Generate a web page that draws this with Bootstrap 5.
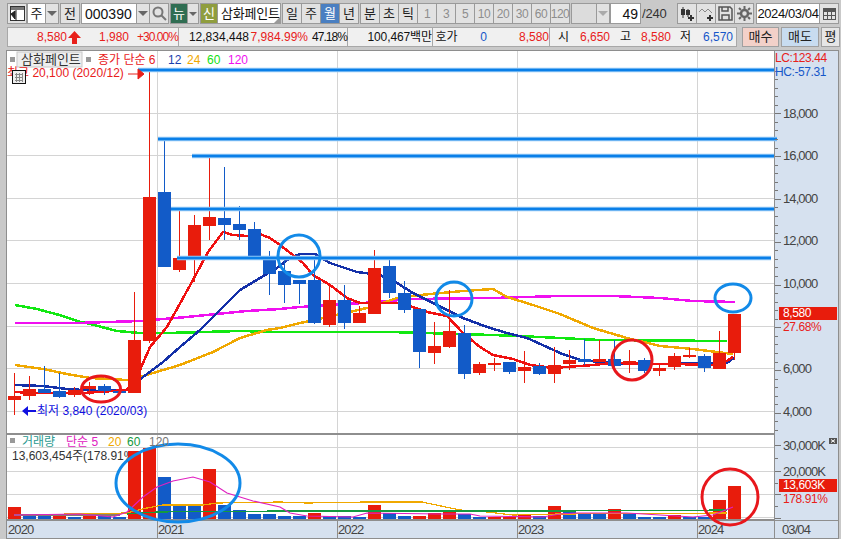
<!DOCTYPE html>
<html lang="ko">
<head>
<meta charset="utf-8">
<title>삼화페인트 차트</title>
<link href="https://cdn.jsdelivr.net/npm/bootstrap@5.3.0/dist/css/bootstrap.min.css" rel="stylesheet">
<style>
html,body{margin:0;height:539px;overflow:hidden;background:#c9c9c9}
body{font-family:"Liberation Sans","Noto Sans CJK KR",sans-serif;font-size:12px;color:#222;line-height:1}
.tool-a{height:21px;margin:3px 0 0 7px}
.tool-b{height:20px;margin:3px 2px 0 7px}
.key{--bs-btn-padding-x:0;--bs-btn-padding-y:0;--bs-btn-font-size:13px;--bs-btn-border-radius:0;--bs-btn-color:#222;--bs-btn-bg:#e2e2e2;--bs-btn-border-color:#9a9a9a;--bs-btn-border-width:1px;--bs-btn-line-height:1;display:flex;align-items:center;justify-content:center;height:21px;width:20px;flex:none;margin-right:-1px;white-space:nowrap}
.key-on{--bs-btn-bg:#4a7fc1;--bs-btn-color:#fff}
.key-off{color:#8d8d8d;font-size:12px;letter-spacing:-.5px}
.key-arrow{width:14px}
.key-mini{width:12px}
.tri{width:0;height:0;border-left:5px solid transparent;border-right:5px solid transparent;border-top:5px solid #666}
.key-mini .tri{border-left-width:4px;border-right-width:4px;border-top-width:4px}
.tri-pale{border-top-color:#aaa}
.field{background:#fff;border:1px solid #9a9a9a;height:21px;display:flex;align-items:center;flex:none;margin-right:-1px;font-size:14px;color:#111}
.w-sel{width:19px;justify-content:center;font-size:13px}
.w-code{width:56px;padding-left:3px}.w-name{width:64px;padding-left:3px;font-size:13px;letter-spacing:-.2px;position:relative}
.w-count{width:31px;justify-content:flex-end;padding-right:2px}.w-date{width:64px;justify-content:center;letter-spacing:-.4px;font-size:13px}
.w-combo{width:26px;background:#dcdcdc}
.corner{position:absolute;right:0;bottom:0;width:0;height:0;border-left:6px solid transparent;border-bottom:6px solid #999}
.badge-new{background:#2f6d52;color:#fff;width:18px;font-size:13px}
.badge-sin{background:#8f9d3e;color:#fff;width:18px;font-size:13px}
.gap3{margin-left:3px}.gap2{margin-left:2px}.gap1{margin-left:1px}
.gap8{margin-left:8px}
.total{width:29px;font-size:13px;color:#333;letter-spacing:-.2px;padding-left:2px;flex:none}
.quote{width:730px;height:20px;background:#f0f0f0;border:1px solid #a8a8a8;flex:none;font-size:12px;color:#111}
.cell{display:flex;align-items:center;justify-content:flex-end;height:100%;flex:none;white-space:nowrap}
.up{color:#e8201a}.dn{color:#1557c9}
.line-r{border-right:1px solid #a8a8a8}
.pct{letter-spacing:-.95px}
.c1{width:59px}.c2{width:15px;justify-content:center}.c3{width:47px}.c4{width:50px}
.c5{width:70px}.c6{width:59px}.c7{width:40px}
.c8{width:84px;letter-spacing:-.1px}.c9{width:28px;justify-content:center;border-left:1px solid #a8a8a8}.c10{width:27px}.c11{width:62px}
.c12{width:20px;justify-content:flex-end;border-left:1px solid #a8a8a8}.c13{width:41px}.c14{width:21px}.c15{width:40px}.c16{width:20px}.c17{width:42px}
.trade{--bs-btn-padding-x:0;--bs-btn-padding-y:0;--bs-btn-font-size:13px;--bs-btn-border-radius:0;--bs-btn-border-color:#a0a0a0;--bs-btn-color:#222;height:20px;flex:none;display:flex;align-items:center;justify-content:center;margin-left:2px}
.buy{width:37px;--bs-btn-bg:#f3d1c9;margin-left:5px}.sell{width:38px;--bs-btn-bg:#c8dcf0}.even{width:19px;--bs-btn-bg:#e6e6e6}
.chart-box{display:block;margin-top:3px}
svg text{font-family:"Liberation Sans","Noto Sans CJK KR",sans-serif;font-size:12px}
.ax{font-size:13px;letter-spacing:-.9px;fill:#444}
.tag{font-size:12px;letter-spacing:-.4px;fill:#fff}
.ax-r{font-size:12px;letter-spacing:-.4px;fill:#e8201a}
.ax-b{font-size:12px;letter-spacing:-.4px;fill:#1557c9}
.lab{font-size:12px}
.chip{font-size:13px}
</style>
</head>
<body>
<div class="d-flex tool-a">
  <div class="btn key"><svg width="15" height="15" viewBox="0 0 15 15"><rect x=".5" y=".5" width="14" height="14" fill="#fff" stroke="#333"/><rect x="1" y="1" width="13" height="3" fill="#777"/><path d="M6 4v11M1 8l4-3v8z" fill="#222" stroke="#222"/></svg></div>
  <div class="gap1 d-flex"><div class="field w-sel">주</div><div class="btn key key-arrow"><span class="tri"></span></div></div>
  <div class="btn key gap2">전</div>
  <div class="gap2 d-flex"><div class="field w-code">000390</div><div class="btn key key-arrow"><span class="tri"></span></div>
  <div class="btn key"><svg width="15" height="15" viewBox="0 0 15 15" fill="none" stroke="#777" stroke-width="2"><circle cx="6" cy="6" r="4.5"/><path d="M9.500 9.500l4.500 4.500"/></svg></div></div>
  <div class="gap2 d-flex"><div class="btn key badge-new">뉴</div><div class="btn key key-mini"><span class="tri"></span></div></div>
  <div class="gap2 d-flex"><div class="btn key badge-sin">신</div><div class="field w-name">삼화페인트<span class="corner"></span></div></div>
  <div class="gap2 d-flex"><div class="btn key">일</div><div class="btn key">주</div><div class="btn key key-on">월</div><div class="btn key">년</div></div>
  <div class="gap2 d-flex"><div class="btn key">분</div><div class="btn key">초</div><div class="btn key">틱</div>
  <div class="btn key key-off">1</div><div class="btn key key-off">3</div><div class="btn key key-off">5</div><div class="btn key key-off">10</div><div class="btn key key-off">20</div><div class="btn key key-off">30</div><div class="btn key key-off">60</div><div class="btn key key-off">120</div></div>
  <div class="gap2 d-flex"><div class="field w-combo"></div><div class="btn key key-arrow"><span class="tri tri-pale"></span></div></div>
  <div class="d-flex gap1"><div class="field w-count">49</div></div><div class="total d-flex align-items-center">/240</div>
  <div class="gap8 d-flex">
    <div class="btn key"><svg width="15" height="15" viewBox="0 0 15 15"><path d="M3 1v11M8 3v8" stroke="#333"/><rect x="1" y="3" width="4" height="6" fill="#333"/><rect x="6" y="4" width="4" height="5" fill="#333"/><path d="M11 9v6M8 12h6" stroke="#333" stroke-width="2"/></svg></div>
    <div class="btn key"><svg width="15" height="15" viewBox="0 0 15 15" fill="none"><path d="M0 6l3-3 3 3 3-3 4 4" stroke="#888"/><path d="M11 9v6M8 12h6" stroke="#333" stroke-width="2"/></svg></div>
    <div class="btn key"><svg width="15" height="15" viewBox="0 0 15 15" fill="none" stroke="#555" stroke-width="1.500"><path d="M1 1h11l2 2v11H1z"/><path d="M4 1v4h6V1M4 14V9h7v5"/></svg></div>
    <div class="btn key"><svg width="15" height="15" viewBox="0 0 15 15" fill="none" stroke="#666"><circle cx="7.500" cy="7.500" r="3.500" stroke-width="2.500"/><path d="M7.500 0v3M7.500 12v3M0 7.500h3M12 7.500h3M2 2l2 2M11 11l2 2M13 2l-2 2M4 11l-2 2" stroke-width="2"/></svg></div>
  </div>
  <div class="gap3 d-flex"><div class="field w-date">2024/03/04</div><div class="btn key"><svg width="15" height="14" viewBox="0 0 15 14" fill="none" stroke="#555"><rect x="1.500" y="1.500" width="12" height="11"/><rect x="1.500" y="1.500" width="12" height="3" fill="#555"/><path d="M5.500 5v7M9.500 5v7M2 8.500h11"/></svg></div></div>
</div>
<div class="d-flex tool-b">
  <div class="quote d-flex">
    <div class="cell c1 up">8,580</div>
    <div class="cell c2"><svg width="13" height="13" viewBox="0 0 13 13"><path d="M6.500 0L13 7H9v6H4V7H0z" fill="#e8201a"/></svg></div>
    <div class="cell c3 up">1,980</div>
    <div class="cell c4 up line-r pct">+30.00%</div>
    <div class="cell c5">12,834,448</div>
    <div class="cell c6 up">7,984.99%</div>
    <div class="cell c7 line-r pct">47.18%</div>
    <div class="cell c8">100,467백만</div>
    <div class="cell c9">호가</div>
    <div class="cell c10 dn">0</div>
    <div class="cell c11 up">8,580</div>
    <div class="cell c12">시</div>
    <div class="cell c13 up">6,650</div>
    <div class="cell c14">고</div>
    <div class="cell c15 up">8,580</div>
    <div class="cell c16">저</div>
    <div class="cell c17 dn">6,570</div>
  </div>
  <div class="btn trade buy">매수</div>
  <div class="btn trade sell">매도</div>
  <div class="btn trade even">평</div>
</div>
<svg class="chart-box" id="chart" width="841" height="489" viewBox="0 50 841 489">
  <rect x="6" y="50" width="833" height="489" fill="#8e8e8e"/>
  <rect x="7" y="51" width="767" height="382" fill="#fff"/>
  <rect x="7" y="435" width="767" height="84" fill="#fff"/>
  <rect x="775" y="51" width="63" height="469" fill="#d6e1ef"/>
  <rect x="7" y="521" width="831" height="17" fill="#d6e1ef"/>
  <g id="grid" stroke="#d4d4d4" shape-rendering="crispEdges"></g>
  <text class="lab" x="12" y="460" fill="#333">13,603,454주(178.91%)</text>
  <g id="vol" shape-rendering="crispEdges"></g>
  <g id="volma" fill="none" stroke-width="1.200"></g>
  <g id="ma" fill="none" stroke-width="2.500"></g>
  <g id="candles" shape-rendering="crispEdges"></g>
  <g id="levels" fill="none"></g>
  <g fill="none" stroke-width="3">
    <ellipse cx="101" cy="389" rx="19.500" ry="13" stroke="#e8171c"/>
    <ellipse cx="632" cy="360" rx="20" ry="20" stroke="#e8171c"/>
    <ellipse cx="730" cy="497" rx="28" ry="28" stroke="#e8171c"/>
    <ellipse cx="299" cy="256" rx="21" ry="21" stroke="#128ae8"/>
    <ellipse cx="454" cy="299" rx="18" ry="17" stroke="#128ae8"/>
    <ellipse cx="733" cy="298" rx="18" ry="14" stroke="#128ae8"/>
    <ellipse cx="178" cy="483" rx="62" ry="39" stroke="#128ae8"/>
  </g>
  <g id="ticks" stroke="#777" shape-rendering="crispEdges"></g>

  <rect x="10" y="57" width="5" height="5" fill="#999"/>
  <rect x="17" y="52" width="65" height="15" fill="#eee" stroke="#c8c8c8"/>
  <text class="chip" x="21" y="64" fill="#333">삼화페인트</text>
  <rect x="86" y="57" width="5" height="5" fill="#999"/>
  <text class="lab" x="98" y="64" fill="#e8201a">종가 단순 6</text>
  <text class="lab" x="168" y="64" fill="#1a3fae">12</text>
  <text class="lab" x="187" y="64" fill="#f0a800">24</text>
  <text class="lab" x="207" y="64" fill="#12e012">60</text>
  <text class="lab" x="228" y="64" fill="#f010f0">120</text>
  <text class="lab" x="7" y="77" fill="#e8201a">최고 20,100 (2020/12)</text>
  <path d="M128 74h10M138 69l6 5-6 5z" stroke="#e8201a" fill="#e8201a"/>
  <rect x="12.500" y="70.500" width="13" height="13" fill="#eee" stroke="#111"/>
  <path d="M15 74.500h8M15 77.500h8M15 80.500h8M16.500 73v9M19.500 73v9M22.500 73v9" stroke="#888" fill="none"/>
  <path d="M22 411l6-5v4h8v2h-8v4z" fill="#1010e0"/>
  <text class="lab" x="37" y="415" fill="#1010e0">최저 3,840 (2020/03)</text>

  <rect x="10" y="438" width="5" height="5" fill="#999"/>
  <text class="lab" x="22" y="446" fill="#2a9a90">거래량</text>
  <text class="lab" x="66" y="446" fill="#e020c0">단순 5</text>
  <text class="lab" x="108" y="446" fill="#f0a800">20</text>
  <text class="lab" x="127" y="446" fill="#149a40">60</text>
  <text class="lab" x="149" y="446" fill="#777">120</text>

  <text x="775" y="62" class="ax-r">LC:123.44</text>
  <text x="775" y="76" class="ax-b">HC:-57.31</text>
  <text x="783" y="118" class="ax">18,000</text>
  <text x="783" y="160" class="ax">16,000</text>
  <text x="783" y="203" class="ax">14,000</text>
  <text x="783" y="245" class="ax">12,000</text>
  <text x="783" y="288" class="ax">10,000</text>
  <text x="783" y="373" class="ax">6,000</text>
  <text x="783" y="416" class="ax">4,000</text>
  <rect x="779" y="307" width="58" height="13" fill="#e81c0c"/>
  <text x="783" y="317" class="tag">8,580</text>
  <text x="783" y="331" class="ax-r">27.68%</text>
  <text x="783" y="450" class="ax">30,000K</text>
  <text x="783" y="476" class="ax">20,000K</text>
  <rect x="779" y="479" width="58" height="13" fill="#e81c0c"/>
  <text x="783" y="489" class="tag">13,603K</text>
  <text x="783" y="503" class="ax-r">178.91%</text>
  <rect x="829" y="438" width="8" height="6" fill="#555"/>
  <path d="M831 439.500l4 3M835 439.500l-4 3" stroke="#fff"/>
  <text x="8" y="534" class="ax">2020</text>
  <text x="158" y="534" class="ax">2021</text>
  <text x="338" y="534" class="ax">2022</text>
  <text x="518" y="534" class="ax">2023</text>
  <text x="698" y="534" class="ax">2024</text>
  <text x="782" y="534" class="ax">03/04</text>
</svg>
<script>
const NS='http://www.w3.org/2000/svg';
function el(p,n,a){const e=document.createElementNS(NS,n);for(const k in a)e.setAttribute(k,a[k]);document.getElementById(p).appendChild(e);return e}
const RED='#e81c0c',BLUE='#125bc8';
[113.5,155.5,198.5,240.5,283.5,326.5,368.5,411.5,447.5,471.5,494.5,517.5].forEach(y=>el('grid','line',{x1:7,x2:774,y1:y,y2:y}));
[157.5,337.5,517.5,697.5].forEach(x=>{el('grid','line',{x1:x,x2:x,y1:51,y2:433});el('grid','line',{x1:x,x2:x,y1:435,y2:519});el('grid','line',{x1:x,x2:x,y1:520,y2:538,stroke:'#8e8e8e'})});
el('grid','line',{x1:7,x2:774,y1:433.5,y2:433.5,stroke:'#8e8e8e'});
el('grid','line',{x1:7,x2:838,y1:520.5,y2:520.5,stroke:'#8e8e8e'});
el('grid','line',{x1:774.5,x2:774.5,y1:51,y2:538,stroke:'#8e8e8e'});
// [colour, body top, body bottom, wick top, wick bottom]
const C=[['r',396,400,373,415],['r',389,396,376,400],['b',389,393,366,393],['b',391,397,373,398],['r',390,395,387,397],['r',386,389,382,395],['b',386,391,384,395],['b',391,393,389,393],['r',340,393,292,393],['r',197,341,70,343],['b',192,267,140,267],['r',258,270,210,272],['r',225,256,215,282],['r',217,226,157,240],['b',218,225,167,240],['b',224,230,206,240],['b',229,257,222,258],['b',257,274,251,295],['b',271,285,257,303],['b',280,284,280,304],['b',280,323,260,324],['r',300,325,285,327],['b',300,323,285,329],['r',313,323,306,323],['r',268,314,250,314],['b',266,293,258,298],['b',293,310,281,313],['b',309,352,309,368],['r',346,353,322,364],['r',331,347,290,348],['b',333,374,325,379],['r',364,373,362,375],['r',363,365,358,371],['b',362,372,362,374],['r',367,371,351,383],['b',366,374,363,375],['r',365,374,347,383],['r',360,364,350,370],['b',359,362,339,365],['r',359,362,340,362],['b',359,366,340,367],['r',361,363,350,373],['b',360,371,358,373],['r',368,371,365,376],['r',356,367,353,370],['r',355,356,348,358],['b',356,368,354,372],['r',353,369,331,369],['r',314,353,314,360]];
const V=[['r',507],['b',515],['b',515],['r',514],['b',517],['r',516],['b',516],['b',517],['r',451],['r',448],['b',477],['b',504],['b',505],['r',469],['b',505],['b',510],['b',514],['b',514],['b',516],['b',516],['r',513],['b',516],['b',516],['b',517],['r',505],['b',513],['b',516],['r',516],['r',513],['r',512],['b',514],['b',517],['r',517],['r',517],['r',515],['b',516],['r',506],['b',512],['b',513],['b',513],['r',509],['b',514],['b',517],['b',517],['r',515],['b',517],['b',517],['r',500],['r',486]];
C.forEach((c,i)=>{const x=8+15*i,f=c[0]=='r'?RED:BLUE;
  el('candles','rect',{x:x+6,y:c[3],width:1,height:c[4]-c[3],fill:f});
  el('candles','rect',{x:x,y:c[1],width:13,height:Math.max(2,c[2]-c[1]),fill:f});
  const t=V[i];el('vol','rect',{x:x,y:t[1],width:13,height:519-t[1],fill:t[0]=='r'?RED:BLUE});});
function poly(g,col,pts){el(g,'polyline',{points:pts,stroke:col,'shape-rendering':'crispEdges'})}
poly('ma','#12e812','15,305 37,309 63,316 77,321 90,324 117,331 140,333 167,333 240,331 280,332 390,332 493,335 540,337 600,340 727,341');
poly('ma','#f010f0','15,323 77,323 140,321 187,317 247,311 280,309 300,307 363,303 413,299 493,298 560,296 613,296 660,298 693,301 735,302');
poly('ma','#f0a800','15,365 43,369 67,374 90,378 127,380 143,376 180,365 213,352 240,338 267,330 280,328 300,323 323,318 367,308 397,298 420,295 463,291 493,289 507,297 533,305 560,314 593,328 627,338 660,346 693,349 733,354');
poly('ma','#1430a8','15,385 43,386 67,389 100,391 127,390 143,377 163,362 180,347 200,330 217,313 240,290 260,278 277,268 290,258 300,254 315,254 330,263 357,272 380,275 397,283 413,293 437,305 463,318 487,327 507,333 527,338 547,347 560,353 580,360 610,363 653,364 727,363 735,357');
poly('ma','#f01010','15,392 33,393 50,393 83,393 127,390 140,370 150,347 167,327 193,280 208,252 223,232 233,235 247,236 257,233 270,238 280,245 293,255 303,263 313,275 330,285 347,298 360,303 397,303 413,307 427,312 447,316 463,333 480,347 493,355 513,359 530,365 553,368 593,365 613,363 653,364 673,364 720,365 733,357');
poly('volma','#f0a800','14,515 127,513 147,508 163,505 203,505 217,503 280,502 307,503 367,502 422,502 460,510 487,512 513,515 560,514 727,513');
poly('volma','#149a40','127,514 157,512 280,511 560,511 727,510');
poly('volma','#8a7a70','14,515 120,515');
el('volma','polyline',{points:'14,515 80,514 113,517 127,512 143,497 157,487 173,481 193,477 210,482 227,493 253,501 280,507 290,513 307,516 353,517 367,513 440,514 470,514 480,516 543,517 560,514 577,513 627,513 693,517 713,515 733,507',stroke:'#e020c0'});
[[138,774,70],[158,777,139],[192,774,156],[171,774,209],[177,771,258]].forEach(l=>{
  el('levels','line',{x1:l[0],x2:l[1],y1:l[2],y2:l[2],stroke:'#8fc6f6','stroke-width':4.5});
  el('levels','line',{x1:l[0],x2:l[1],y1:l[2],y2:l[2],stroke:'#0a7fe8','stroke-width':2.5});});
for(let y=70.5;y<433;y+=8.56){const r=Math.round(y-113.5)/42.8;const major=Math.abs(r-Math.round(r))<.03;el('ticks','line',{x1:775,x2:major?781:778,y1:Math.round(y)+.5,y2:Math.round(y)+.5})}
[445.5,458.5,471.5,483.5,494.5,506.5,518.5].forEach((y,i)=>el('ticks','line',{x1:775,x2:i%2==0?781:778,y1:y,y2:y}));
</script>
<script src="https://cdn.jsdelivr.net/npm/bootstrap@5.3.0/dist/js/bootstrap.bundle.min.js"></script>
</body>
</html>
